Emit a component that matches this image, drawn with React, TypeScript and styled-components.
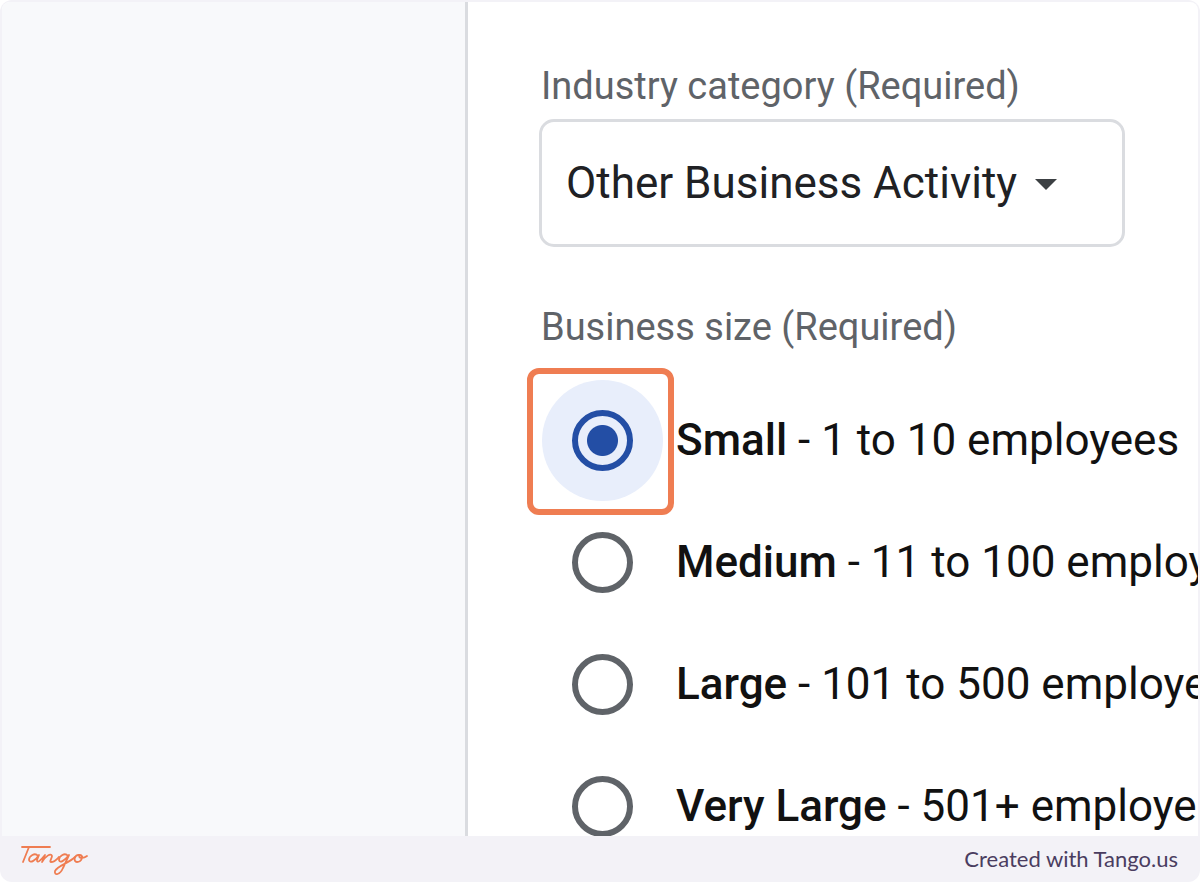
import React from "react";
import styled, { createGlobalStyle } from "styled-components";

const Global = createGlobalStyle`
  * { box-sizing: border-box; }
  body { margin: 0; background: #ffffff; font-family: Roboto, "Liberation Sans", sans-serif; }
`;

const Frame = styled.div`
  display: flex;
  flex-direction: column;
  height: 100vh;
  background: #f3f2f7;
  border-radius: 12px;
  overflow: hidden;
`;

const Viewport = styled.div`
  display: flex;
  flex: 1;
  min-height: 0;
  margin: 2px 2px 0;
  border-radius: 8px 8px 0 0;
  overflow: hidden;
  background: #ffffff;
`;

const Sidebar = styled.aside`
  flex: 0 0 466px;
  background: #f8f9fb;
  border-right: 3px solid #dadce0;
`;

const Form = styled.form`
  flex: 1;
  min-width: 0;
  padding: 60px 0 0 71px;
`;

const Caption = styled.label`
  display: block;
  padding-left: 2px;
  font-size: 38px;
  line-height: 48px;
  color: #5f6368;
`;

const SelectBox = styled.div`
  position: relative;
  width: 586px;
  margin: 9px 0 56px;
`;

const Select = styled.select`
  display: block;
  width: 100%;
  height: 128px;
  padding: 0 24px;
  appearance: none;
  border: 3px solid #dadce0;
  border-radius: 15px;
  background: #ffffff;
  font: 400 44px/56px Roboto, "Liberation Sans", sans-serif;
  color: #202124;
`;

const Caret = styled.svg`
  position: absolute;
  top: 60px;
  right: 68px;
  width: 22px;
  height: 11px;
  pointer-events: none;
`;

const Group = styled.fieldset`
  margin: 0;
  padding: 0;
  border: 0;
  min-width: 0;
`;

const Legend = styled(Caption)`
  padding-bottom: 29px;
`;

const Options = styled.div`
  display: flex;
  flex-direction: column;
  gap: 1px;
  padding-left: 3px;
`;

const Option = styled.label`
  display: flex;
  align-items: center;
  gap: 13px;
  font-size: 44px;
  line-height: 56px;
  color: #111111;
  white-space: nowrap;
`;

const OptionText = styled.span`
  padding-bottom: 2px;
`;

const Strong = styled.strong`
  font-weight: 500;
`;

const Halo = styled.span<{ $on: boolean }>`
  position: relative;
  display: flex;
  flex: none;
  padding: 30px;
  border-radius: 50%;
  background: ${(p) => (p.$on ? "#e8eefb" : "transparent")};
`;

const Radio = styled.input`
  appearance: none;
  width: 61px;
  height: 61px;
  margin: 0;
  border: 6px solid #5f6368;
  border-radius: 50%;
  &:checked {
    border-color: #234ea5;
    background: radial-gradient(circle, #234ea5 15px, transparent 16px);
  }
`;

const Highlight = styled.span`
  position: absolute;
  inset: -12px -11px -14px -15px;
  border: 6px solid #ef7d52;
  border-radius: 12px;
  pointer-events: none;
`;

const Footer = styled.footer`
  display: flex;
  align-items: center;
  justify-content: space-between;
  height: 46px;
  padding: 0 22px 0 20px;
`;

const Logo = styled.svg`
  display: block;
  width: 70px;
  height: 36px;
`;

const Credit = styled.span`
  font: 400 22px/28px Lato, sans-serif;
  color: #4a3d60;
`;

const sizes = [
  { name: "Small", range: "1 to 10 employees" },
  { name: "Medium", range: "11 to 100 employees" },
  { name: "Large", range: "101 to 500 employees" },
  { name: "Very Large", range: "501+ employees" },
];

export default function App() {
  const [size, setSize] = React.useState("Small");
  return (
    <>
      <Global />
      <Frame>
        <Viewport>
          <Sidebar />
          <Form>
            <Caption htmlFor="industry">Industry category (Required)</Caption>
            <SelectBox>
              <Select id="industry">
                <option>Other Business Activity</option>
              </Select>
              <Caret viewBox="0 0 22 11" aria-hidden="true">
                <path d="M0 0H22L11 11Z" fill="#3c4043" />
              </Caret>
            </SelectBox>
            <Group>
              <Legend as="legend">Business size (Required)</Legend>
              <Options>
                {sizes.map((s) => (
                  <Option key={s.name}>
                    <Halo $on={size === s.name}>
                      <Radio
                        type="radio"
                        name="size"
                        checked={size === s.name}
                        onChange={() => setSize(s.name)}
                      />
                      {size === s.name && <Highlight />}
                    </Halo>
                    <OptionText>
                      <Strong>{s.name}</Strong> - {s.range}
                    </OptionText>
                  </Option>
                ))}
              </Options>
            </Group>
          </Form>
        </Viewport>
        <Footer>
          <Logo viewBox="0 0 70 36" role="img" aria-label="Tango">
            <g fill="none" stroke="#ef7d52" strokeWidth="1.8" strokeLinecap="round" strokeLinejoin="round">
              <path d="M2 6H30M9 6L3 21" />
              <path d="M18 15C15 11 9 15 9 19C10 23 16 19 19 14L17 19C17 23 21 19 25 14L22 21C25 16 31 11 32 15C32 17 29 21 31 21C35 21 37 18 39 16" />
              <path d="M48 15C45 11 39 15 39 19C40 23 45 19 49 14L43 27C40 34 34 35 35 30C37 25 49 22 55 16" />
              <path d="M60 14C54 13 53 21 57 21C62 21 64 14 60 14C57 17 63 18 67 15" />
            </g>
          </Logo>
          <Credit>Created with Tango.us</Credit>
        </Footer>
      </Frame>
    </>
  );
}
